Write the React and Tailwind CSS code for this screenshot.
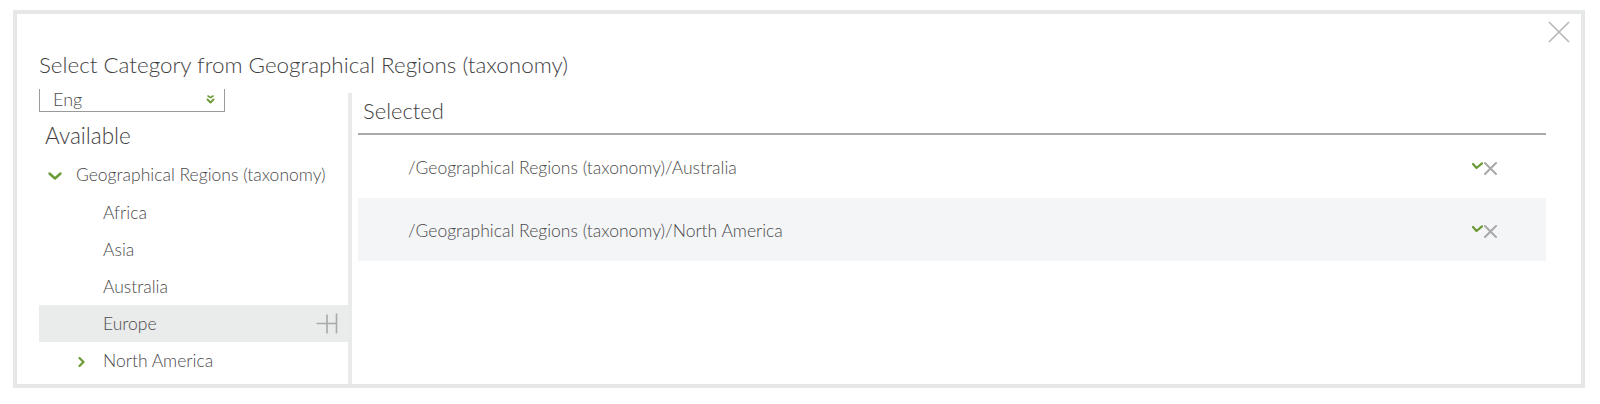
import React from "react";

const font = { fontFamily: "Lato, 'Open Sans', 'Liberation Sans', sans-serif" };

function ChevronDown() {
  return (
    <svg width="14" height="8" viewBox="0 0 14 8" className="shrink-0">
      <path d="M1.5 1.5 L7 6.5 L12.5 1.5" fill="none" stroke="#6b9a35" strokeWidth="2.4" strokeLinecap="round" strokeLinejoin="round" />
    </svg>
  );
}

function ChevronRight() {
  return (
    <svg width="7" height="10" viewBox="0 0 7 10" className="shrink-0">
      <path d="M1.5 1 L5.5 5 L1.5 9" fill="none" stroke="#6b9a35" strokeWidth="2.2" strokeLinecap="round" strokeLinejoin="round" />
    </svg>
  );
}

function SelectIcon() {
  return (
    <svg width="9" height="9" viewBox="0 0 9 9">
      <path d="M2 1 L4.5 2.6 L7 1" fill="none" stroke="#6b9a35" strokeWidth="1.6" strokeLinecap="round" strokeLinejoin="round" />
      <path d="M1.5 4.5 L4.5 7.5 L7.5 4.5" fill="none" stroke="#6b9a35" strokeWidth="1.8" strokeLinecap="round" strokeLinejoin="round" />
    </svg>
  );
}

function AddIcon() {
  return (
    <svg width="22" height="22" viewBox="0 0 22 22">
      <path d="M0.5 10.5 H21 M11 1.5 V20.5 M20.5 0.5 V20.5" fill="none" stroke="#a9a9a9" strokeWidth="1.6" />
    </svg>
  );
}

function RowIcons() {
  return (
    <div className="flex items-start gap-[1px]">
      <svg width="11" height="12" viewBox="0 0 11 12">
        <path d="M1 2 L4.5 6 L10 1.3" fill="none" stroke="#6b9a35" strokeWidth="2.2" strokeLinecap="round" strokeLinejoin="round" />
      </svg>
      <svg width="13" height="13" viewBox="0 0 13 13">
        <path d="M1 1 L12 12 M12 1 L1 12" fill="none" stroke="#a8a8a8" strokeWidth="2" strokeLinecap="round" />
      </svg>
    </div>
  );
}

export default function App() {
  const children = ["Africa", "Asia", "Australia"];
  return (
    <div className="w-[1600px] h-[404px] bg-white pt-[10px] pl-[13px]" style={font}>
      <div className="relative w-[1572px] h-[378px] border-4 border-[#e6e7e7] flex flex-col text-[#4a4a4a]">
        <svg className="absolute right-[11px] top-[7px]" width="22" height="22" viewBox="0 0 22 22">
          <path d="M1 1 L21 21 M21 1 L1 21" fill="none" stroke="#b5b5b5" strokeWidth="1.6" />
        </svg>

        <div className="pt-[37px] pl-[22px] h-[66px] text-[22.4px] leading-[28px] font-light text-[#3f3f3f] whitespace-nowrap">
          Select Category from Geographical Regions (taxonomy)
        </div>

        <div className="mt-[9px] flex h-[295px] pl-[22px] pr-[35px]">
          {/* Left panel (scrolled slightly) */}
          <div className="w-[309px] h-full overflow-hidden shrink-0">
            <div className="-mt-[9px]">
              <div className="w-[186px] h-[32px] border border-[#9a9a9a] flex items-center justify-between pl-[13px] pr-[9px] pt-[6px]">
                <span className="text-[18px] font-light text-[#4a4a4a]">Eng</span>
                <SelectIcon />
              </div>
              <div className="mt-[10px] h-[28px] pl-[6px] text-[22.5px] leading-[28px] font-light text-[#3f3f3f]">Available</div>
              <div className="mt-[7px] text-[17.5px] font-light whitespace-nowrap">
                <div className="h-[37px] flex items-center pl-[9px]">
                  <ChevronDown />
                  <span className="ml-[14px]">Geographical Regions (taxonomy)</span>
                </div>
                {children.map((c) => (
                  <div key={c} className="h-[37px] flex items-center pl-[64px] pt-[1px]">{c}</div>
                ))}
                <div className="h-[37px] flex items-center justify-between pl-[64px] pr-[10px] pt-[1px] bg-[#eaebeb]">
                  <span>Europe</span>
                  <AddIcon />
                </div>
                <div className="h-[37px] flex items-center pl-[39px] pt-[2px]">
                  <ChevronRight />
                  <span className="ml-[18px]">North America</span>
                </div>
              </div>
            </div>
          </div>

          {/* Divider */}
          <div className="w-[4px] mt-[4px] bg-[#e9eaeb] shrink-0" />

          {/* Right panel */}
          <div className="flex-1 pl-[6px] mt-[4px]">
            <div className="h-[42px] pt-[4px] pl-[5px] border-b-2 border-[#a9a9a9] text-[22px] leading-[28px] font-light text-[#3f3f3f]">
              Selected
            </div>
            <div className="text-[17.5px] font-light">
              <div className="h-[63px] flex items-center justify-between pl-[50px] pr-[49px] pt-[4px]">
                <span>/Geographical Regions (taxonomy)/Australia</span>
                <RowIcons />
              </div>
              <div className="h-[63px] flex items-center justify-between pl-[50px] pr-[49px] pt-[4px] bg-[#f4f5f7]">
                <span>/Geographical Regions (taxonomy)/North America</span>
                <RowIcons />
              </div>
            </div>
          </div>
        </div>
      </div>
    </div>
  );
}
